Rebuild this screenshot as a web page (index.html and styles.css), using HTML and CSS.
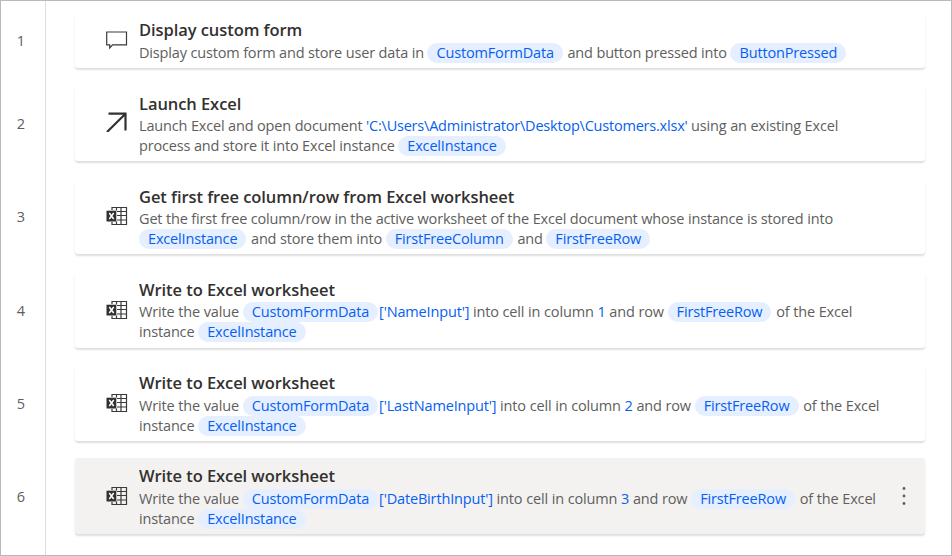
FILE: index.html
```html
<!DOCTYPE html>
<html lang="en">
<head>
<meta charset="utf-8">
<title>Flow actions</title>
<link rel="stylesheet" href="styles.css">
</head>
<body>
<svg class="defs" aria-hidden="true">
  <symbol id="excel" viewBox="0 0 22 20">
    <path d="M6 4V1.5H20.5V18.5H6V16M11 5.5H20.5M11 9.5H20.5M11 14H20.5M10.5 1.5V4.500M10.500 15.5V18.5M15 1.5V18.5" fill="none" stroke="#3b3a39" stroke-width="1.2"/>
    <path d="M.5 4.700H10.300V15.500H.5Z" fill="#323130"/>
    <path d="M3.300 7L7.700 13M7.700 7L3.300 13" stroke="#fff" stroke-width="1.5"/>
  </symbol>
</svg>
<main class="flow">
  <section class="step step-first">
    <span class="number">1</span>
    <article class="card">
      <svg class="icon" viewBox="0 0 22 20"><path d="M.7 2H20.500V14.800H6.500L3.700 18V14.800H.7Z" fill="none" stroke="#3b3a39" stroke-width="1.2"/></svg>
      <div class="body">
        <h2>Display custom form</h2>
        <p>Display custom form and store user data in <b>CustomFormData</b> and button pressed into <b>ButtonPressed</b></p>
      </div>
    </article>
  </section>
  <section class="step">
    <span class="number">2</span>
    <article class="card">
      <svg class="icon icon-arrow" viewBox="0 0 22 20"><path d="M2.500 1.700H19.500V18.500M19.500 1.700L1 20" fill="none" stroke="#323130" stroke-width="2.2"/></svg>
      <div class="body">
        <h2>Launch Excel</h2>
        <p>Launch Excel and open document <i class="path">'C:\Users\Administrator\Desktop\Customers.xlsx'</i> using an existing Excel<br>process and store it into Excel instance <b>ExcelInstance</b></p>
      </div>
    </article>
  </section>
  <section class="step">
    <span class="number">3</span>
    <article class="card">
      <svg class="icon"><use href="#excel"/></svg>
      <div class="body">
        <h2>Get first free column/row from Excel worksheet</h2>
        <p>Get the first free column/row in the active worksheet of the Excel document whose instance is stored into<br><b>ExcelInstance</b> and store them into <b>FirstFreeColumn</b> and <b>FirstFreeRow</b></p>
      </div>
    </article>
  </section>
  <section class="step">
    <span class="number">4</span>
    <article class="card">
      <svg class="icon"><use href="#excel"/></svg>
      <div class="body">
        <h2>Write to Excel worksheet</h2>
        <p class="write">Write the value <b>CustomFormData</b><i>['NameInput']</i> into cell in column <i>1</i> and row <b>FirstFreeRow</b> of the Excel<br>instance <b>ExcelInstance</b></p>
      </div>
    </article>
  </section>
  <section class="step">
    <span class="number">5</span>
    <article class="card">
      <svg class="icon"><use href="#excel"/></svg>
      <div class="body">
        <h2>Write to Excel worksheet</h2>
        <p class="write">Write the value <b>CustomFormData</b><i>['LastNameInput']</i> into cell in column <i>2</i> and row <b>FirstFreeRow</b> of the Excel<br>instance <b>ExcelInstance</b></p>
      </div>
    </article>
  </section>
  <section class="step">
    <span class="number">6</span>
    <article class="card selected">
      <svg class="icon"><use href="#excel"/></svg>
      <div class="body">
        <h2>Write to Excel worksheet</h2>
        <p class="write">Write the value <b>CustomFormData</b><i>['DateBirthInput']</i> into cell in column <i>3</i> and row <b>FirstFreeRow</b> of the Excel<br>instance <b>ExcelInstance</b></p>
      </div>
      <svg class="more" viewBox="0 0 4 20"><circle cx="2" cy="2.5" r="1.4"/><circle cx="2" cy="10" r="1.4"/><circle cx="2" cy="17.5" r="1.4"/></svg>
    </article>
  </section>
</main>
</body>
</html>
```
FILE: styles.css
```css
* { box-sizing: border-box; }
body {
  margin: 0;
  font-family: "Open Sans", "Noto Sans", sans-serif;
  font-size: 14.5px;
  color: #605e5c;
  background: #fff;
}
.defs { position: absolute; width: 0; height: 0; }
.flow {
  width: 952px;
  height: 556px;
  padding-top: 11px;
  border: 1px solid #b9b9b9;
  background: linear-gradient(#dedede, #dedede) 44px 0 / 1px 100% no-repeat;
  overflow: hidden;
}
.step {
  display: grid;
  grid-template-columns: 40px 850px;
  column-gap: 34px;
  height: 75.8px;
  margin-bottom: 17.4px;
}
.step-first { height: 56px; }
.number {
  align-self: center;
  padding-top: 2px;
  text-align: center;
  line-height: 20px;
}
.card {
  display: flex;
  align-items: center;
  padding: 0 19px 0 31px;
  border-radius: 3px;
  background: #fff;
  box-shadow: 0 2px 2px rgba(0, 0, 0, .13);
}
.selected { background: #f3f2f1; }
.icon { flex: none; width: 22px; height: 20px; }
.icon-arrow { position: relative; top: -1px; }
.body { flex: 1; margin-left: 11px; padding-top: 3px; white-space: nowrap; }
h2 {
  margin: 0 0 1.8px;
  font-size: 16.5px;
  font-weight: 600;
  line-height: 20.6px;
  letter-spacing: -.07px;
  color: #323130;
}
p { margin: 0; line-height: 19.6px; letter-spacing: -.16px; }
.write { word-spacing: .15px; }
.path { letter-spacing: -.21px; }
b {
  display: inline-block;
  height: 20px;
  margin: 0 1px 0 0;
  padding: 0 9px;
  border-radius: 10px;
  background: #e5efff;
  color: #0560f2;
  font-weight: 400;
  vertical-align: top;
}
i { font-style: normal; color: #0560f2; }
.more { width: 4px; height: 20px; fill: #605e5c; }
```
